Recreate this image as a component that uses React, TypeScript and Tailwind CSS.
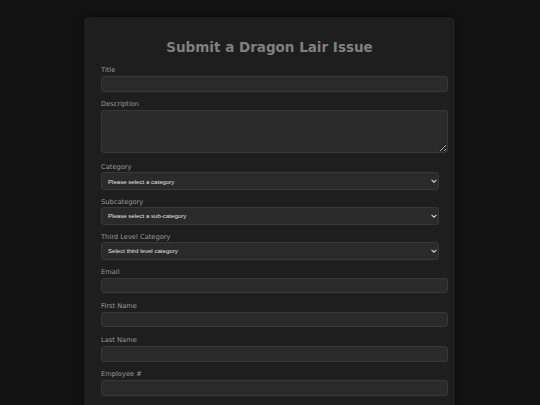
import React from "react";

const label = "block h-[8px] text-[6.7px] leading-[8px] text-[#9a9a9a] mb-[1.6px]";
const input =
  "block w-[347px] h-[15.7px] rounded-[3px] border border-[#383838] bg-[#2a2a2a] outline-none";

function Chevron() {
  return (
    <svg
      className="pointer-events-none absolute right-[2px] top-1/2 -translate-y-1/2"
      width="6"
      height="4"
      viewBox="0 0 6 4"
    >
      <path d="M0.6 0.8 L3 3.2 L5.4 0.8" fill="none" stroke="#d0d0d0" strokeWidth="1.1" />
    </svg>
  );
}

function SelectField({ name, placeholder, mb }: { name: string; placeholder: string; mb: string }) {
  return (
    <div className={mb}>
      <label className={label}>{name}</label>
      <div className="relative w-[338px]">
        <select
          className="block w-[338px] h-[17.7px] appearance-none rounded-[3px] border border-[#383838] bg-[#2a2a2a] pl-[6px] text-[6.1px] text-[#e0e0e0] outline-none"
          style={{ fontFamily: '"Liberation Sans", Arial, sans-serif' }}
        >
          <option>{placeholder}</option>
        </select>
        <Chevron />
      </div>
    </div>
  );
}

export default function App() {
  return (
    <div
      className="min-h-[405px] bg-[#121212] pt-[17px] pl-[84px] overflow-hidden"
      style={{ fontFamily: '"DejaVu Sans", Verdana, sans-serif' }}
    >
      <div className="w-[371px] rounded-[5px] bg-[#1e1e1e] px-[17px] pt-[22px] pb-[30px] shadow-[0_0_6px_rgba(0,0,0,0.4)]">
        <h1 className="text-center text-[13.5px] leading-[16px] font-bold text-[#808080] mb-[11.4px]">
          Submit a Dragon Lair Issue
        </h1>

        <div className="mb-[8.7px]">
          <label className={label}>Title</label>
          <input className={input} />
        </div>

        <div className="mb-[10px]">
          <label className={label}>Description</label>
          <textarea className="block w-[347px] h-[42.7px] rounded-[3px] border border-[#383838] bg-[#2a2a2a] outline-none" />
        </div>

        <SelectField name="Category" placeholder="Please select a category" mb="mb-[7.7px]" />
        <SelectField name="Subcategory" placeholder="Please select a sub-category" mb="mb-[7.7px]" />
        <SelectField name="Third Level Category" placeholder="Select third level category" mb="mb-[8.1px]" />

        {["Email", "First Name", "Last Name", "Employee #"].map((n) => (
          <div key={n} className="mb-[8.9px]">
            <label className={label}>{n}</label>
            <input className={input} />
          </div>
        ))}

        <div className="flex justify-center">
          <button className="w-[42px] h-[18px] rounded-[3px] border border-[#6e6e6e] bg-[#3a3a3a] pt-[6px] text-[6.7px] leading-[8px] text-[#ddd]">
            Submit
          </button>
        </div>
      </div>
    </div>
  );
}
